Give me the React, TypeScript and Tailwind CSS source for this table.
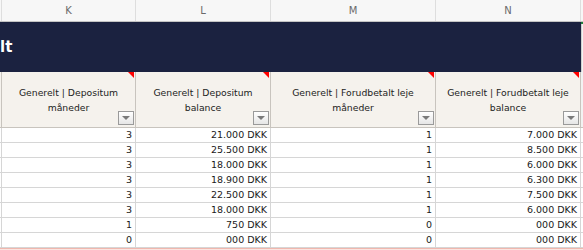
import { Fragment } from 'react'

type Col = {
  letter: string
  width: string
  title: string[]
  values: string[]
}

const columns: Col[] = [
  {
    letter: 'K',
    width: 'w-[134px]',
    title: ['Generelt | Depositum', 'måneder'],
    values: ['3', '3', '3', '3', '3', '3', '1', '0'],
  },
  {
    letter: 'L',
    width: 'w-[135px]',
    title: ['Generelt | Depositum', 'balance'],
    values: ['21.000 DKK', '25.500 DKK', '18.000 DKK', '18.900 DKK', '22.500 DKK', '18.000 DKK', '750 DKK', '000 DKK'],
  },
  {
    letter: 'M',
    width: 'w-[165px]',
    title: ['Generelt | Forudbetalt leje', 'måneder'],
    values: ['1', '1', '1', '1', '1', '1', '0', '0'],
  },
  {
    letter: 'N',
    width: 'w-[145px]',
    title: ['Generelt | Forudbetalt leje', 'balance'],
    values: ['7.000 DKK', '8.500 DKK', '6.000 DKK', '6.300 DKK', '7.500 DKK', '6.000 DKK', '000 DKK', '000 DKK'],
  },
]

const font = { fontFamily: '"DejaVu Sans", "Liberation Sans", sans-serif' }

function FilterButton() {
  return (
    <div className="absolute bottom-[2px] right-[1px] w-[16px] h-[14px] border border-[#9a9a9a] bg-gradient-to-b from-[#ffffff] to-[#e6e6e6] flex items-center justify-center">
      <div className="w-0 h-0 border-l-[4px] border-r-[4px] border-t-[4px] border-l-transparent border-r-transparent border-t-[#7a7a7a]" />
    </div>
  )
}

function CommentMark() {
  return (
    <div className="absolute top-0 right-[1px] w-0 h-0 border-l-[6px] border-t-[6px] border-l-transparent border-t-[#ff0000]" />
  )
}

export default function App() {
  const rowCount = columns[0].values.length

  return (
    <div className="w-[583px] h-[250px] overflow-hidden bg-white text-[#1f1f1f]" style={font}>
      {/* column letters */}
      <div className="flex h-[22px] bg-[#f7f7f7] border-b border-[#c4c4c4]">
        <div className="w-[2px] border-r border-[#dedede]" />
        {columns.map((c) => (
          <div
            key={c.letter}
            className={`${c.width} border-r border-[#dedede] flex items-center justify-center text-[10px] text-[#6a6a6a]`}
          >
            {c.letter}
          </div>
        ))}
        <div className="flex-1" />
      </div>

      {/* sheet title band (title scrolled mostly out of view) */}
      <div className="flex h-[50px]">
        <div className="flex w-[581px] bg-[#1b2240] items-center">
          <span className="pl-[0px] text-[15px] font-bold text-white leading-none">lt</span>
        </div>
        <div className="flex-1 bg-[#f2f2f2] border-l border-[#d0d0d0] relative">
          <div className="absolute top-0 left-[-1px] w-[3px] h-[2px] bg-[#1e7d3a]" />
        </div>
      </div>

      {/* header cells */}
      <div className="flex h-[56px] border-b border-[#c8c4be] bg-[#f5f2ed]">
        <div className="w-[2px] border-r border-[#c8c4be] relative overflow-hidden">
          <div className="absolute bottom-[2px] right-[1px] w-[2px] h-[14px] bg-[#b8b8b8]" />
        </div>
        {columns.map((c) => (
          <div
            key={c.letter}
            className={`${c.width} relative border-r border-[#c8c4be] flex flex-col items-center justify-center text-[9.25px] leading-[15px] text-[#222]`}
          >
            {c.title.map((line) => (
              <span key={line}>{line}</span>
            ))}
            <CommentMark />
            <FilterButton />
          </div>
        ))}
        <div className="flex-1 bg-[#f2f2f2]" />
      </div>

      {/* data rows */}
      {Array.from({ length: rowCount }).map((_, i) => (
        <div key={i} className="flex h-[15px] border-b border-[#d6d6d6]">
          <div className="w-[2px] border-r border-[#d6d6d6]" />
          {columns.map((c) => (
            <Fragment key={c.letter}>
              <div
                className={`${c.width} border-r border-[#d6d6d6] flex items-center justify-end pr-[3px] text-[9.5px] text-[#1a1a1a]`}
              >
                {c.values[i]}
              </div>
            </Fragment>
          ))}
          <div className="flex-1" />
        </div>
      ))}

      {/* next row, highlighted */}
      <div className="flex h-[4px] bg-[#fbe4e0] border-t border-[#f0b7ae]" />
    </div>
  )
}
